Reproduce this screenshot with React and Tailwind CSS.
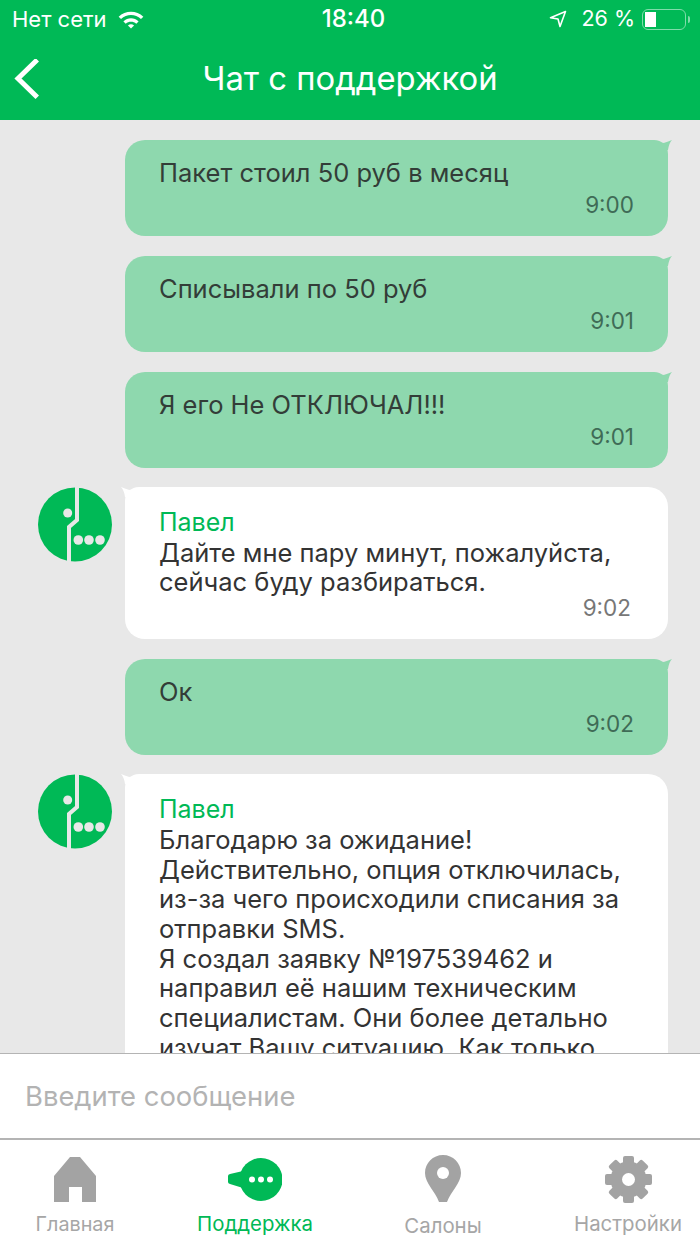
import React from 'react';

const messages = [
  { mine: true, text: ['Пакет стоил 50 руб в месяц'], time: '9:00' },
  { mine: true, text: ['Списывали по 50 руб'], time: '9:01' },
  { mine: true, text: ['Я его Не ОТКЛЮЧАЛ!!!'], time: '9:01' },
  { name: 'Павел', text: ['Дайте мне пару минут, пожалуйста,', 'сейчас буду разбираться.'], time: '9:02' },
  { mine: true, text: ['Ок'], time: '9:02' },
  {
    name: 'Павел',
    text: [
      'Благодарю за ожидание!',
      'Действительно, опция отключилась,',
      'из-за чего происходили списания за',
      'отправки SMS.',
      'Я создал заявку №197539462 и',
      'направил её нашим техническим',
      'специалистам. Они более детально',
      'изучат Вашу ситуацию. Как только',
    ],
  },
];

function Avatar() {
  return (
    <svg width="74" height="75" viewBox="0 0 74 75" className="shrink-0">
      <circle cx="37" cy="37.5" r="37" fill="#00b956" />
      <path d="M39 0 V33 L31 40 V75" fill="none" stroke="#e8e8e8" strokeWidth="4" />
      <circle cx="29.700" cy="26" r="4.500" fill="#e8e8e8" />
      <circle cx="40.300" cy="53" r="4.800" fill="#e8e8e8" />
      <circle cx="51" cy="53" r="4.800" fill="#e8e8e8" />
      <circle cx="62" cy="53" r="4.800" fill="#e8e8e8" />
    </svg>
  );
}

function Bubble({ m }) {
  if (m.mine) {
    return (
      <div className="relative ml-[125px] mr-[32px] h-[96px] rounded-[20px] rounded-tr-[14px] bg-[#8ed8ae] pl-[34px] pr-[34px] pt-[18px]">
        <svg width="14" height="10" viewBox="0 0 14 10" className="absolute right-[-4px] top-0">
          <path d="M0 3.500 Q6 3.500 14 0 Q11 3 10 10 L0 10 Z" fill="#8ed8ae" />
        </svg>
        <p className="text-[25.5px] leading-[30px] text-[#333d38]">{m.text[0]}</p>
        <p className="mt-[2px] text-right text-[22.5px] leading-[30px] text-[#3f6b56]">{m.time}</p>
      </div>
    );
  }
  return (
    <div className="-mt-px flex">
      <div className="ml-[38px] mr-[13px]">
        <Avatar />
      </div>
      <div className="relative mr-[32px] flex-1 rounded-[20px] rounded-tl-[14px] bg-white pb-[16px] pl-[34px] pr-[37px] pt-[21px]">
        <svg width="14" height="10" viewBox="0 0 14 10" className="absolute left-[-4px] top-0">
          <path d="M14 3.500 Q8 3.500 0 0 Q3 3 4 10 L14 10 Z" fill="#ffffff" />
        </svg>
        <p className="text-[25px] leading-[29.7px] text-[#00b956]">{m.name}</p>
        {m.text.map((line) => (
          <p key={line} className="whitespace-nowrap text-[25.5px] leading-[29.7px] text-[#333333]">
            {line}
          </p>
        ))}
        {m.time && <p className="-mt-[4px] text-right text-[22.5px] leading-[30px] text-[#777777]">{m.time}</p>}
      </div>
    </div>
  );
}

function TabItem({ icon, label, active, className, labelSize }) {
  return (
    <div className={`flex flex-col items-center ${className || ''}`}>
      <div className="flex h-[50px] items-center justify-center">{icon}</div>
      <span className={`whitespace-nowrap leading-[24px] ${labelSize || 'text-[20.4px]'} ${active ? 'text-[#00b956]' : 'text-[#a6a6a6]'}`}>
        {label}
      </span>
    </div>
  );
}

function App() {
  return (
    <div className="flex h-[1245px] w-[700px] flex-col overflow-hidden bg-[#e8e8e8] font-['Inter','Liberation_Sans',sans-serif]">
      {/* Header */}
      <div className="h-[120px] shrink-0 bg-[#00b956] text-white">
        <div className="flex h-[38px] items-center justify-between pl-[12px] pr-[10px]">
          <div className="flex w-[245px] items-center gap-[10px]">
            <span className="text-[22px] leading-none">Нет сети</span>
            <svg width="28" height="19" viewBox="0 0 28 20">
              <path d="M1 7 C8 0 20 0 27 7 L24.500 9.500 C18.500 4 9.500 4 3.500 9.500 Z" fill="#fff" />
              <path d="M6 12 C10.500 7.500 17.500 7.500 22 12 L19.500 14.500 C16.500 11.800 11.500 11.800 8.500 14.500 Z" fill="#fff" />
              <path d="M10.800 16.300 C12.800 14.700 15.200 14.700 17.200 16.300 L14 19.500 Z" fill="#fff" />
            </svg>
          </div>
          <span className="text-[24px] font-medium leading-none">18:40</span>
          <div className="flex w-[240px] items-center justify-end">
            <svg width="18" height="18" viewBox="0 0 18 18" className="mr-[14px]">
              <path d="M16.500 1.500 L1.500 7.800 L9 9 L11 16.500 Z" fill="none" stroke="#fff" strokeWidth="1.600" strokeLinejoin="round" />
            </svg>
            <span className="mr-[7px] text-[21.5px] leading-none">26 %</span>
            <div className="flex h-[21px] w-[44px] items-center rounded-[6px] border-[1.5px] border-[#7fdcaa] p-[2px]">
              <div className="h-full w-[11px] bg-white" />
            </div>
            <div className="ml-[2px] h-[7px] w-[2px] rounded-r-[2px] bg-[#7fdcaa]" />
          </div>
        </div>
        <div className="relative flex h-[80px] items-center justify-center">
          <svg width="26" height="40" viewBox="0 0 26 40" className="absolute left-[13px] top-[21px]">
            <path d="M22.500 2.500 L5 19.500 L22.500 36.500" fill="none" stroke="#fff" strokeWidth="5" strokeLinecap="square" />
          </svg>
          <span className="text-[32.8px] font-normal leading-none">Чат с поддержкой</span>
        </div>
      </div>

      {/* Messages */}
      <div className="flex min-h-0 flex-1 flex-col gap-[20px] overflow-hidden pt-[20px]">
        {messages.map((m, i) => (
          <div key={i} className="shrink-0">
            <Bubble m={m} />
          </div>
        ))}
      </div>

      {/* Input */}
      <div className="flex h-[87px] shrink-0 items-center border-y-2 border-[#b4b4b4] bg-white pl-[25px] pt-[2px] [border-top-width:1px]">
        <span className="text-[27.4px] text-[#b3b3b3]">Введите сообщение</span>
      </div>

      {/* Tabs */}
      <div className="grid h-[105px] shrink-0 grid-cols-[150px_210px_166px_174px] bg-white pt-[14px]">
        <TabItem
          label="Главная"
          labelSize="text-[19.8px]"
          className="gap-[8px]"
          icon={
            <svg width="42" height="45" viewBox="0 0 42 45">
              <path d="M16 0 H26 L42 19 V45 H28 V30 H15 V45 H0 V19 Z" fill="#a3a3a3" />
            </svg>
          }
        />
        <TabItem
          active
          label="Поддержка"
          className="gap-[8px]"
          icon={
            <svg width="54" height="43" viewBox="0 0 54 43">
              <circle cx="33" cy="21.500" r="21.500" fill="#00b956" />
              <path d="M15 13 L2 16 Q0 16.500 0 18 V24 Q0 25.500 2 26 L15 30 Z" fill="#00b956" />
              <circle cx="24" cy="21.500" r="3" fill="#fff" />
              <circle cx="33" cy="21.500" r="3" fill="#fff" />
              <circle cx="42" cy="21.500" r="3" fill="#fff" />
            </svg>
          }
        />
        <TabItem
          label="Салоны"
          className="gap-[10px]"
          icon={
            <svg width="36" height="48" viewBox="0 0 36 48">
              <path d="M18 0 C8 0 0 8 0 18 C0 28 10 36 14 47 H22 C26 36 36 28 36 18 C36 8 28 0 18 0 Z" fill="#a3a3a3" />
              <circle cx="18" cy="18" r="6" fill="#fff" />
            </svg>
          }
        />
        <TabItem
          label="Настройки"
          className="gap-[8px] pl-[30px]"
          icon={
            <svg width="47" height="47" viewBox="0 0 47 47">
              <circle cx="23.500" cy="23.500" r="18" fill="#a3a3a3" />
              <g fill="#a3a3a3">
                <rect x="18" y="0" width="11" height="47" rx="2" />
                <rect x="18" y="0" width="11" height="47" rx="2" transform="rotate(45 23.500 23.500)" />
                <rect x="18" y="0" width="11" height="47" rx="2" transform="rotate(90 23.500 23.500)" />
                <rect x="18" y="0" width="11" height="47" rx="2" transform="rotate(135 23.500 23.500)" />
              </g>
              <circle cx="23.500" cy="23.500" r="6.500" fill="#fff" />
            </svg>
          }
        />
      </div>
    </div>
  );
}

export default App;
